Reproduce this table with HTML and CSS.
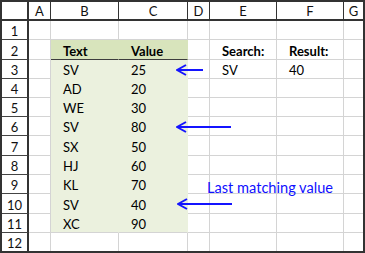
FILE: index.html
```html
<!DOCTYPE html>
<html>
<head>
<meta charset="utf-8">
<link rel="stylesheet" href="styles.css">
</head>
<body>
<div class="sheet">
  <div class="grid">
    <div class="ch corner"></div><div class="ch">A</div><div class="ch">B</div><div class="ch">C</div><div class="ch">D</div><div class="ch">E</div><div class="ch">F</div><div class="ch last">G</div>

    <div class="rh">1</div><div class="c"></div><div class="c"></div><div class="c"></div><div class="c"></div><div class="c"></div><div class="c"></div><div class="c last"></div>

    <div class="rh">2</div><div class="c"></div><div class="c th">Text</div><div class="c th">Value</div><div class="c"></div><div class="c b">Search:</div><div class="c b">Result:</div><div class="c last"></div>

    <div class="rh">3</div><div class="c"></div><div class="c td">SV</div><div class="c td">25</div><div class="c"></div><div class="c">SV</div><div class="c">40</div><div class="c last"></div>

    <div class="rh">4</div><div class="c"></div><div class="c td">AD</div><div class="c td">20</div><div class="c"></div><div class="c"></div><div class="c"></div><div class="c last"></div>

    <div class="rh">5</div><div class="c"></div><div class="c td">WE</div><div class="c td">30</div><div class="c"></div><div class="c"></div><div class="c"></div><div class="c last"></div>

    <div class="rh">6</div><div class="c"></div><div class="c td">SV</div><div class="c td">80</div><div class="c"></div><div class="c"></div><div class="c"></div><div class="c last"></div>

    <div class="rh">7</div><div class="c"></div><div class="c td">SX</div><div class="c td">50</div><div class="c"></div><div class="c"></div><div class="c"></div><div class="c last"></div>

    <div class="rh">8</div><div class="c"></div><div class="c td">HJ</div><div class="c td">60</div><div class="c"></div><div class="c"></div><div class="c"></div><div class="c last"></div>

    <div class="rh">9</div><div class="c"></div><div class="c td">KL</div><div class="c td">70</div><div class="c"></div><div class="c"></div><div class="c"></div><div class="c last"></div>

    <div class="rh">10</div><div class="c"></div><div class="c td">SV</div><div class="c td">40</div><div class="c"></div><div class="c"></div><div class="c"></div><div class="c last"></div>

    <div class="rh">11</div><div class="c"></div><div class="c td end">XC</div><div class="c td end">90</div><div class="c"></div><div class="c"></div><div class="c"></div><div class="c last"></div>

    <div class="rh bottom">12</div><div class="c bottom"></div><div class="c bottom"></div><div class="c bottom"></div><div class="c bottom"></div><div class="c bottom"></div><div class="c bottom"></div><div class="c last bottom"></div>
  </div>

  <svg class="arrow a1" width="28" height="12" viewBox="0 0 28 12"><path d="M1 6H27M10 1L1 6L10 11" fill="none" stroke="#1414ff" stroke-width="2"/></svg>
  <svg class="arrow a2" width="56" height="12" viewBox="0 0 56 12"><path d="M1 6H55M10 1L1 6L10 11" fill="none" stroke="#1414ff" stroke-width="2"/></svg>
  <svg class="arrow a3" width="56" height="12" viewBox="0 0 56 12"><path d="M1 6H55M10 1L1 6L10 11" fill="none" stroke="#1414ff" stroke-width="2"/></svg>
  <div class="label">Last matching value</div>
</div>
</body>
</html>
```

FILE: styles.css
```css
html, body {
  margin: 0;
  padding: 0;
  background: #ffffff;
}
.sheet {
  position: relative;
  width: 365px;
  height: 253px;
  box-sizing: border-box;
  border: 2px solid #333333;
  font-family: Lato, "Liberation Sans", sans-serif;
  font-size: 13px;
  color: #000000;
}
.grid {
  display: grid;
  grid-template-columns: 27px 22px 68px 69px 22px 67px 67px 19px;
  grid-template-rows: 19px 19px 20px 19px 19px 19px 19px 20px 19px 19px 20px 19px 18px;
}
.grid > div {
  box-sizing: border-box;
  display: flex;
  align-items: flex-end;
  line-height: 16px;
  white-space: nowrap;
  overflow: hidden;
}
.ch {
  justify-content: center;
  border-right: 1px solid #333333;
  border-bottom: 2px solid #333333;
  color: #111111;
}
.ch.corner {
  border-right: 2px solid #333333;
}
.rh {
  justify-content: center;
  border-right: 2px solid #333333;
  border-bottom: 1px solid #444444;
  color: #111111;
}
.c {
  padding-left: 12px;
  border-right: 1px solid #d4d4d4;
  border-bottom: 1px solid #d4d4d4;
}
.last {
  border-right: none !important;
}
.bottom {
  border-bottom: none !important;
}
.b {
  font-weight: bold;
}
.th {
  font-weight: bold;
  background: #d8e4bc;
  border-right-color: #d8e4bc;
  border-bottom: 1px solid #3d3d3d;
}
.td {
  background: #ebf1de;
  border-right-color: #ebf1de;
  border-bottom-color: #ebf1de;
}
.td.end {
  border-bottom-color: #d4d4d4;
}
.arrow {
  position: absolute;
  display: block;
}
.a1 { left: 174px; top: 62px; }
.a2 { left: 174px; top: 119px; }
.a3 { left: 175px; top: 196px; }
.label {
  position: absolute;
  left: 205px;
  top: 178px;
  font-size: 14.6px;
  line-height: 16px;
  color: #1010ff;
  white-space: nowrap;
}
```
